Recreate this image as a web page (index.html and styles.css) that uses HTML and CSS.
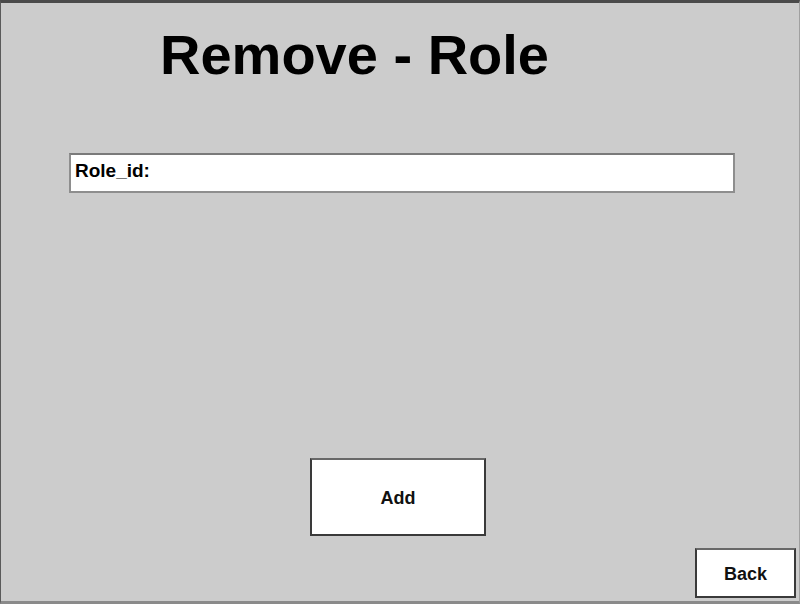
FILE: index.html
```html
<!DOCTYPE html>
<html>
<head>
<meta charset="utf-8">
<title>Remove - Role</title>
<link rel="stylesheet" href="styles.css">
</head>
<body>
<div class="frame">
  <h1 class="title">Remove - Role</h1>
  <div class="field"><span class="field-label">Role_id:</span></div>
  <button class="btn btn-add">Add</button>
  <button class="btn btn-back">Back</button>
</div>
</body>
</html>
```
FILE: styles.css
```css
html, body {
  margin: 0;
  padding: 0;
}
body {
  width: 800px;
  height: 604px;
  overflow: hidden;
  font-family: "Liberation Sans", Arial, sans-serif;
}
.frame {
  box-sizing: border-box;
  width: 800px;
  height: 604px;
  background: #cccccc;
  border-top: 3px solid #4a4a4a;
  border-left: 1px solid #5a5a5a;
  border-right: 1px solid #a0a0a0;
  border-bottom: 3px solid #8a8a8a;
  display: flex;
  flex-direction: column;
  align-items: flex-start;
}
.title {
  margin: 20px 0 0 159px;
  font-size: 56px;
  line-height: 64px;
  font-weight: bold;
  color: #000;
}
.field {
  box-sizing: border-box;
  margin: 66px 0 0 68px;
  width: 666px;
  height: 40px;
  background: #fff;
  border: 2px solid #8e8e8e;
  border-top-color: #7a7a7a;
  padding: 5px 0 0 4px;
}
.field-label {
  font-size: 19px;
  line-height: 22px;
  font-weight: bold;
  color: #000;
}
.btn {
  box-sizing: border-box;
  background: #fff;
  border: 2px solid #3a3a3a;
  border-top-color: #686868;
  font-family: "Liberation Sans", Arial, sans-serif;
  font-weight: bold;
  font-size: 18px;
  color: #111;
  padding: 2px 0 0 0;
}
.btn-add {
  margin: 265px 0 0 309px;
  width: 176px;
  height: 78px;
}
.btn-back {
  margin: 12px 0 0 694px;
  width: 101px;
  height: 50px;
}
```
